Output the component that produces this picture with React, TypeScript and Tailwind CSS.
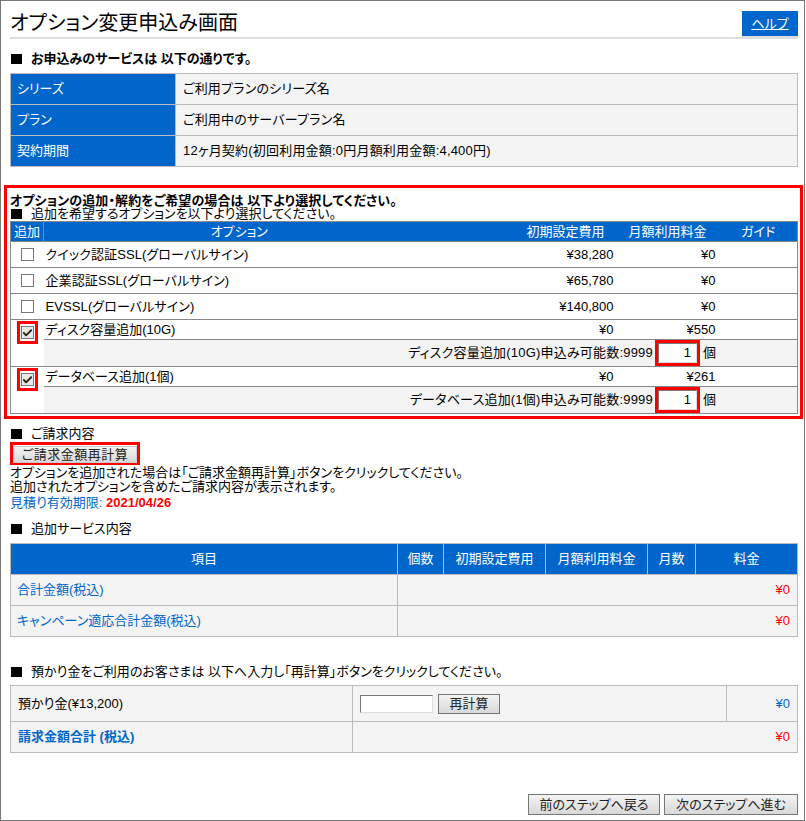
import { Check } from "lucide-react";

const font = "font-['Liberation_Sans','Noto_Sans_CJK_JP',sans-serif] [font-feature-settings:'palt']";

const options = [
  { name: "クイック認証SSL(グローバルサイン)", setup: "¥38,280", monthly: "¥0" },
  { name: "企業認証SSL(グローバルサイン)", setup: "¥65,780", monthly: "¥0" },
  { name: "EVSSL(グローバルサイン)", setup: "¥140,800", monthly: "¥0" },
];

const extras = [
  { name: "ディスク容量追加(10G)", setup: "¥0", monthly: "¥550", limit: "ディスク容量追加(10G)申込み可能数:9999" },
  { name: "データベース追加(1個)", setup: "¥0", monthly: "¥261", limit: "データベース追加(1個)申込み可能数:9999" },
];

function Heading({ children, bold = false }: { children: React.ReactNode; bold?: boolean }) {
  return (
    <p className={`flex h-[14px] items-center leading-[14px] ${bold ? "font-bold" : ""}`}>
      <span className="mr-[9px] ml-px inline-block h-[10px] w-[11px] bg-black" />
      {children}
    </p>
  );
}

function GrayButton({ children, className = "" }: { children: React.ReactNode; className?: string }) {
  return (
    <button
      type="button"
      className={`border border-[#777] bg-gradient-to-b from-[#f4f4f4] to-[#d8d8d8] text-[13px] leading-none text-[#222] ${className}`}
    >
      {children}
    </button>
  );
}

function Box({ checked = false }: { checked?: boolean }) {
  return (
    <span className={`flex h-[13px] w-[13px] items-center justify-center border border-[#777] ${checked ? "bg-[#e8e8e8]" : "bg-white"}`}>
      {checked && <Check className="h-[12px] w-[12px] text-[#222]" strokeWidth={4} />}
    </span>
  );
}

function QtyInput() {
  return (
    <span className="block h-[26px] w-[45px] border-[3px] border-[#f00]">
      <span className="block h-[20px] border border-t-[#777] border-r-[#ddd] border-b-[#ddd] border-l-[#777] bg-white pr-[5px] text-right leading-[18px]">
        1
      </span>
    </span>
  );
}

export default function App() {
  return (
    <div className={`h-[821px] w-[805px] border border-[#777] bg-white pl-[9px] text-[13px] text-black ${font}`}>
      <div className="w-[788px]">
        <div className="flex h-[38px] items-end border-b-2 border-[#ddd]">
          <h1 className="flex-1 text-[20px] leading-[28px] font-normal tracking-[0.05px]">オプション変更申込み画面</h1>
          <a className="flex h-[26px] w-[56px] items-center justify-center border-b border-[#ddd] bg-[#0066cc] text-white underline">
            ヘルプ
          </a>
        </div>

        <div className="mt-[13px]">
          <Heading bold>お申込みのサービスは 以下の通りです。</Heading>
        </div>
        <table className="mt-[7px] w-[788px] table-fixed">
          <colgroup>
            <col className="w-[165px]" />
            <col />
          </colgroup>
          <tbody>
            {[
              ["シリーズ", "ご利用プランのシリーズ名"],
              ["プラン", "ご利用中のサーバープラン名"],
              ["契約期間", "12ヶ月契約(初回利用金額:0円月額利用金額:4,400円)"],
            ].map(([label, value]) => (
              <tr key={label} className="h-[31px]">
                <th className="border border-[#bbb] bg-[#0066cc] pl-[6px] text-left font-normal text-white">{label}</th>
                <td className="border border-[#bbb] bg-[#f4f4f4] pl-[7px] tracking-[0.2px]">{value}</td>
              </tr>
            ))}
          </tbody>
        </table>

        <section className="mt-[18px] -ml-[6px] h-[234px] w-[799px] border-[3px] border-[#f00] pl-[3px]">
          <p className="mt-[6px] h-[13px] leading-[13px] font-bold tracking-[0.1px]">オプションの追加・解約をご希望の場合は 以下より選択してください。</p>
          <Heading>追加を希望するオプションを以下より選択してください。</Heading>
          <table className="w-[788px] table-fixed leading-[16px]">
            <colgroup>
              <col className="w-[33px]" />
              <col className="w-[391px]" />
              <col className="w-[180px]" />
              <col className="w-[111px]" />
              <col />
            </colgroup>
            <thead>
              <tr className="h-[20px] bg-[#0066cc] text-white">
                <th className="border border-[#888] pl-[3px] text-left font-normal">追加</th>
                <th className="border-y border-[#888] font-normal">オプション</th>
                <th className="border-y border-[#888] pr-[10px] text-right font-normal whitespace-nowrap">初期設定費用</th>
                <th className="border-y border-[#888] pr-[19px] text-right font-normal whitespace-nowrap">月額利用料金</th>
                <th className="border-y border-r border-[#888] pr-[6px] font-normal">ガイド</th>
              </tr>
            </thead>
            <tbody>
              {options.map((o) => (
                <tr key={o.name} className="h-[26px]">
                  <td className="border-y border-l border-[#888]">
                    <span className="flex justify-center">
                      <Box />
                    </span>
                  </td>
                  <td className="border-y border-[#888] pl-[2px] tracking-[0.1px]">{o.name}</td>
                  <td className="border-y border-[#888] pr-[1px] text-right">{o.setup}</td>
                  <td className="border-y border-[#888] pr-[10px] text-right">{o.monthly}</td>
                  <td className="border-y border-r border-[#888]" />
                </tr>
              ))}
              {extras.map((e) => (
                <>
                  <tr key={e.name} className="h-[20px]">
                    <td rowSpan={2} className="border-y border-l border-[#888] align-top">
                      <span className="mt-px ml-[6px] flex h-[23px] w-[21px] items-center justify-center border-[3px] border-[#f00]">
                        <Box checked />
                      </span>
                    </td>
                    <td className="border-y border-[#888] pl-[2px]">{e.name}</td>
                    <td className="border-y border-[#888] pr-[1px] text-right">{e.setup}</td>
                    <td className="border-y border-[#888] pr-[10px] text-right">{e.monthly}</td>
                    <td className="border-y border-r border-[#888]" />
                  </tr>
                  <tr className="h-[27px] bg-[#f4f4f4]">
                    <td colSpan={4} className="border-y border-r border-[#888] p-0">
                      <div className="flex h-[26px] items-center justify-end pr-[81px]">
                        <span className="tracking-[0.2px]">{e.limit}</span>
                        <span className="ml-[2px]">
                          <QtyInput />
                        </span>
                        <span className="ml-[3px]">個</span>
                      </div>
                    </td>
                  </tr>
                </>
              ))}
            </tbody>
          </table>
        </section>

        <div className="mt-[8px]">
          <Heading>ご請求内容</Heading>
        </div>
        <span className="mt-px block h-[23px] w-[130px] border-[3px] border-[#f00]">
          <GrayButton className="h-[17px] w-[124px] border-[#ccc] tracking-[0.5px]">ご請求金額再計算</GrayButton>
        </span>
        <p className="mt-px leading-[14px]">
          オプションを追加された場合は「ご請求金額再計算」ボタンをクリックしてください。
          <br />
          追加されたオプションを含めたご請求内容が表示されます。
        </p>
        <p className="mt-px leading-[15px] text-[#0066cc]">
          見積り有効期限: <span className="font-bold text-[#f00]">2021/04/26</span>
        </p>

        <div className="mt-[12px]">
          <Heading>追加サービス内容</Heading>
        </div>
        <table className="mt-[7px] w-[788px] table-fixed">
          <colgroup>
            <col className="w-[387px]" />
            <col className="w-[46px]" />
            <col className="w-[102px]" />
            <col className="w-[102px]" />
            <col className="w-[48px]" />
            <col />
          </colgroup>
          <thead>
            <tr className="h-[31px] bg-[#0066cc] text-white">
              {["項目", "個数", "初期設定費用", "月額利用料金", "月数", "料金"].map((h) => (
                <th key={h} className="border border-[#bbb] font-normal">
                  {h}
                </th>
              ))}
            </tr>
          </thead>
          <tbody>
            {["合計金額(税込)", "キャンペーン適応合計金額(税込)"].map((label) => (
              <tr key={label} className="h-[31px] bg-[#f4f4f4]">
                <td className="border border-[#bbb] pl-[6px] text-[#0066cc]">{label}</td>
                <td colSpan={5} className="border border-[#bbb] pr-[7px] text-right text-[#f00]">
                  ¥0
                </td>
              </tr>
            ))}
          </tbody>
        </table>

        <div className="mt-[28px]">
          <Heading>預かり金をご利用のお客さまは 以下へ入力し「再計算」ボタンをクリックしてください。</Heading>
        </div>
        <table className="mt-[6px] w-[788px] table-fixed">
          <colgroup>
            <col className="w-[342px]" />
            <col className="w-[374px]" />
            <col />
          </colgroup>
          <tbody className="bg-[#f4f4f4]">
            <tr className="h-[36px]">
              <td className="border border-[#bbb] pl-[7px]">預かり金(¥13,200)</td>
              <td className="border border-[#bbb] pl-[7px]">
                <div className="flex items-center">
                  <input
                    readOnly
                    className="h-[18px] w-[73px] border border-t-[#777] border-r-[#ddd] border-b-[#ddd] border-l-[#777] bg-white"
                  />
                  <GrayButton className="ml-[5px] h-[20px] w-[62px]">再計算</GrayButton>
                </div>
              </td>
              <td className="border border-[#bbb] pr-[7px] text-right text-[#0066cc]">¥0</td>
            </tr>
            <tr className="h-[31px]">
              <td className="border border-[#bbb] pl-[7px] font-bold text-[#0066cc]">請求金額合計 (税込)</td>
              <td colSpan={2} className="border border-[#bbb] pr-[7px] text-right text-[#f00]">
                ¥0
              </td>
            </tr>
          </tbody>
        </table>

        <div className="mt-[41px] flex justify-end gap-[4px]">
          <GrayButton className="h-[21px] w-[132px]">前のステップへ戻る</GrayButton>
          <GrayButton className="h-[21px] w-[134px]">次のステップへ進む</GrayButton>
        </div>
      </div>
    </div>
  );
}
